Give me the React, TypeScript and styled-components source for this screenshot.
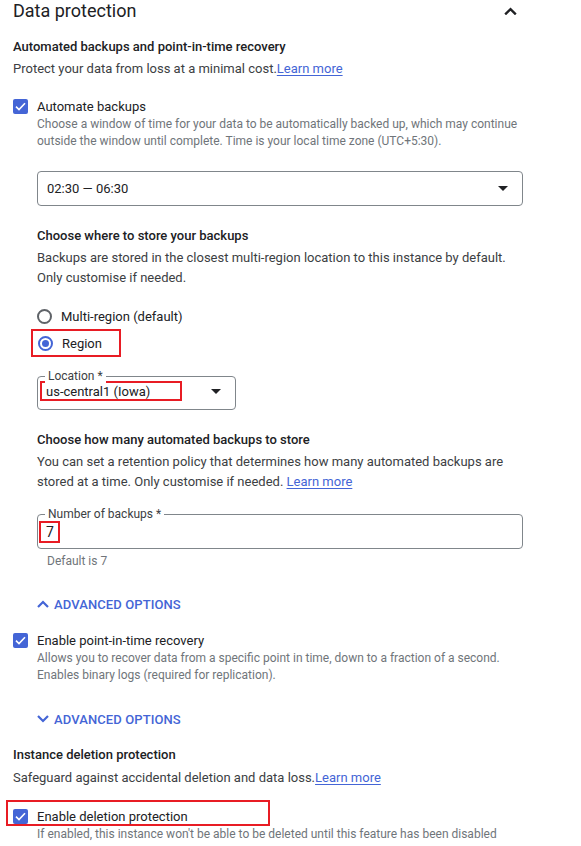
import React from "react";
import styled, { createGlobalStyle } from "styled-components";

const GlobalStyle = createGlobalStyle`
  body {
    margin: 0;
    background: #fff;
    font-family: Roboto, "Liberation Sans", Arial, sans-serif;
    color: #202124;
  }
`;

const BLUE = "#4465d6";
const RED = "#e81c24";

const Page = styled.div`
  width: 510px;
  padding-left: 13px;
  display: flex;
  flex-direction: column;
`;

const Header = styled.div`
  display: flex;
  align-items: center;
  justify-content: space-between;
  height: 22px;
  padding-right: 6px;
`;

const Title = styled.h2`
  margin: 0;
  font-size: 18px;
  font-weight: 400;
  line-height: 22px;
  color: #202124;
`;

const Heading = styled.h3<{ $mt: number }>`
  margin: ${(p) => p.$mt}px 0 0;
  font-size: 13px;
  font-weight: 500;
  line-height: 20px;
  color: #202124;
`;

const Text = styled.p<{ $mt?: number }>`
  margin: ${(p) => p.$mt ?? 2}px 0 0;
  font-size: 13px;
  line-height: 20px;
  color: #3c4043;
`;

const Link = styled.a`
  color: ${BLUE};
  text-decoration: underline;
  text-underline-offset: 2px;
  text-decoration-thickness: 1px;
`;

const Indent = styled.div`
  padding-left: 24px;
  display: flex;
  flex-direction: column;
`;

const CheckRow = styled.label<{ $mt?: number }>`
  display: flex;
  align-items: center;
  gap: 9px;
  height: 20px;
  margin-top: ${(p) => p.$mt ?? 0}px;
  font-size: 13px;
  color: #202124;
`;

const Box = styled.span`
  width: 15px;
  height: 15px;
  border-radius: 2px;
  background: ${BLUE};
  display: flex;
  align-items: center;
  justify-content: center;
  flex-shrink: 0;
`;

const Hint = styled.div<{ $mt?: number }>`
  margin-top: ${(p) => p.$mt ?? 0}px;
  padding-left: 24px;
  font-size: 12px;
  line-height: 17px;
  color: #70757a;
`;

const Select = styled.div<{ $w: number; $mt: number; $h: number }>`
  position: relative;
  box-sizing: border-box;
  width: ${(p) => p.$w}px;
  height: ${(p) => p.$h}px;
  margin-top: ${(p) => p.$mt}px;
  border: 1px solid #80868b;
  border-radius: 4px;
  display: flex;
  align-items: center;
  justify-content: space-between;
  padding: 0 14px 0 9px;
  font-size: 13px;
  color: #202124;
`;

const Arrow = styled.span`
  width: 0;
  height: 0;
  border-left: 5px solid transparent;
  border-right: 5px solid transparent;
  border-top: 5px solid #202124;
`;

const FieldLabel = styled.span`
  position: absolute;
  top: -8px;
  left: 7px;
  padding: 0 3px;
  background: #fff;
  font-size: 12px;
  line-height: 14px;
  color: #3c4043;
`;

const Field = styled.div<{ $w: number; $mt: number }>`
  position: relative;
  box-sizing: border-box;
  width: ${(p) => p.$w}px;
  margin-top: ${(p) => p.$mt}px;
  border: 1px solid #80868b;
  border-radius: 4px;
  display: flex;
  align-items: flex-start;
  justify-content: space-between;
  font-size: 13px;
  color: #202124;
`;

const Marked = styled.div<{ $w: number; $h: number }>`
  box-sizing: border-box;
  width: ${(p) => p.$w}px;
  height: ${(p) => p.$h}px;
  border: 2px solid ${RED};
  display: flex;
  align-items: center;
`;

const RadioRow = styled.label`
  display: flex;
  align-items: center;
  gap: 9px;
  height: 24px;
  font-size: 13px;
  color: #202124;
`;

const Radio = styled.span<{ $on?: boolean }>`
  box-sizing: border-box;
  width: 15px;
  height: 15px;
  border-radius: 50%;
  border: 2px solid ${(p) => (p.$on ? BLUE : "#5f6368")};
  display: flex;
  align-items: center;
  justify-content: center;
  &::after {
    content: "";
    width: 7px;
    height: 7px;
    border-radius: 50%;
    background: ${(p) => (p.$on ? BLUE : "transparent")};
  }
`;

const Advanced = styled.button<{ $mt: number }>`
  display: flex;
  align-items: center;
  gap: 5px;
  height: 20px;
  margin: ${(p) => p.$mt}px 0 0;
  padding: 0;
  border: 0;
  background: none;
  font-family: inherit;
  font-size: 13px;
  font-weight: 500;
  letter-spacing: 0.1px;
  color: ${BLUE};
  text-transform: uppercase;
  align-self: flex-start;
`;

const Tick = () => (
  <svg width="11" height="9" viewBox="0 0 11 9">
    <path d="M1 4.6 L4 7.5 L10 1.3" fill="none" stroke="#fff" strokeWidth="1.6" />
  </svg>
);

const Chevron = ({ up, color, w }: { up: boolean; color: string; w: number }) => (
  <svg width={w} height={w / 2 + 2} viewBox="0 0 12 8">
    <path
      d={up ? "M1 7 L6 2 L11 7" : "M1 1 L6 6 L11 1"}
      fill="none"
      stroke={color}
      strokeWidth="2.2"
    />
  </svg>
);

function Check({ label, mt }: { label: string; mt?: number }) {
  return (
    <CheckRow $mt={mt}>
      <Box>
        <Tick />
      </Box>
      {label}
    </CheckRow>
  );
}

export default function App() {
  return (
    <>
      <GlobalStyle />
      <Page>
        <Header>
          <Title>Data protection</Title>
          <Chevron up color="#202124" w={13} />
        </Header>

        <Heading $mt={15}>Automated backups and point-in-time recovery</Heading>
        <Text>
          Protect your data from loss at a minimal cost.<Link>Learn more</Link>
        </Text>

        <Check label="Automate backups" mt={17} />
        <Hint>
          Choose a window of time for your data to be automatically backed up, which may continue
          <br />
          outside the window until complete. Time is your local time zone (UTC+5:30).
        </Hint>

        <Indent>
          <Select $w={486} $h={35} $mt={21}>
            <span>02:30 — 06:30</span>
            <Arrow />
          </Select>

          <Heading $mt={20}>Choose where to store your backups</Heading>
          <Text>
            Backups are stored in the closest multi-region location to this instance by default.
            <br />
            Only customise if needed.
          </Text>

          <RadioRow style={{ marginTop: 16 }}>
            <Radio />
            Multi-region (default)
          </RadioRow>
          <Marked $w={90} $h={28} style={{ marginLeft: -6, marginTop: 1, paddingLeft: 5 }}>
            <RadioRow>
              <Radio $on />
              Region
            </RadioRow>
          </Marked>

          <Field $w={199} $mt={19} style={{ height: 34, padding: "4px 14px 0 2px" }}>
            <FieldLabel>Location *</FieldLabel>
            <Marked $w={142} $h={20} style={{ paddingLeft: 4 }}>
              us-central1 (Iowa)
            </Marked>
            <Arrow style={{ marginTop: 8 }} />
          </Field>

          <Heading $mt={20}>Choose how many automated backups to store</Heading>
          <Text>
            You can set a retention policy that determines how many automated backups are
            <br />
            stored at a time. Only customise if needed. <Link>Learn more</Link>
          </Text>

          <Field $w={486} $mt={22} style={{ height: 35, padding: "6px 0 0 1px" }}>
            <FieldLabel>Number of backups *</FieldLabel>
            <Marked $w={21} $h={22} style={{ paddingLeft: 5, fontSize: 14 }}>
              7
            </Marked>
          </Field>
          <Hint $mt={4} style={{ paddingLeft: 10, lineHeight: "16px" }}>
            Default is 7
          </Hint>

          <Advanced $mt={25}>
            <Chevron up color={BLUE} w={12} />
            Advanced options
          </Advanced>
        </Indent>

        <Check label="Enable point-in-time recovery" mt={16} />
        <Hint>
          Allows you to recover data from a specific point in time, down to a fraction of a second.
          <br />
          Enables binary logs (required for replication).
        </Hint>

        <Indent>
          <Advanced $mt={25}>
            <Chevron up={false} color={BLUE} w={12} />
            Advanced options
          </Advanced>
        </Indent>

        <Heading $mt={16}>Instance deletion protection</Heading>
        <Text $mt={3}>
          Safeguard against accidental deletion and data loss.<Link>Learn more</Link>
        </Text>

        <Marked
          $w={264}
          $h={26}
          style={{ marginLeft: -7, marginTop: 12, paddingLeft: 5, paddingTop: 4, alignItems: "flex-start" }}
        >
          <Check label="Enable deletion protection" />
        </Marked>
        <Hint>If enabled, this instance won't be able to be deleted until this feature has been disabled</Hint>
      </Page>
    </>
  );
}
